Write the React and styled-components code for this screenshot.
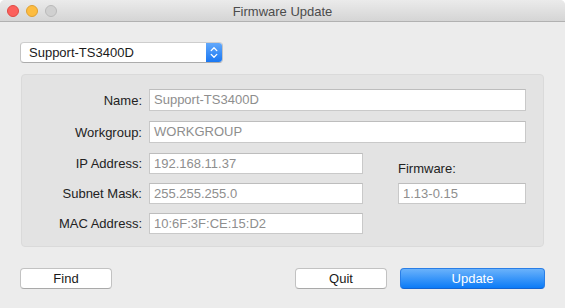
import React from "react";
import styled, { createGlobalStyle } from "styled-components";

const GlobalStyle = createGlobalStyle`
  html, body {
    margin: 0;
    padding: 0;
    background: #ffffff;
  }
  body {
    font-family: "Liberation Sans", Arial, sans-serif;
    font-size: 13px;
    -webkit-font-smoothing: antialiased;
  }
`;

const Window = styled.div`
  width: 565px;
  height: 308px;
  background: #ececec;
  border-radius: 5px 5px 0 0;
  overflow: hidden;
  display: flex;
  flex-direction: column;
`;

const TitleBar = styled.div`
  position: relative;
  height: 21px;
  flex: 0 0 21px;
  background: linear-gradient(#ebebeb, #d5d5d5);
  border-bottom: 1px solid #b1b1b1;
  display: flex;
  align-items: center;
  justify-content: center;
`;

const Lights = styled.div`
  position: absolute;
  left: 7px;
  top: 5px;
  display: flex;
  gap: 7px;
`;

const Light = styled.span`
  width: 12px;
  height: 12px;
  box-sizing: border-box;
  border-radius: 50%;
  background: ${(p) => p.color};
  border: 0.5px solid ${(p) => p.edge};
`;

const Title = styled.div`
  color: #4c4c4c;
  font-size: 13px;
  margin-top: 1px;
`;

const Content = styled.div`
  padding: 20px 20px 0 20px;
  display: flex;
  flex-direction: column;
`;

const Popup = styled.div`
  width: 203px;
  height: 21px;
  box-sizing: border-box;
  display: flex;
  background: #ffffff;
  border: 1px solid #c3c3c3;
  border-top-color: #cdcdcd;
  border-bottom-color: #acacac;
  border-radius: 4px;
  overflow: hidden;
`;

const PopupText = styled.div`
  flex: 1;
  padding-left: 8px;
  line-height: 19px;
  color: #1a1a1a;
`;

const Stepper = styled.div`
  width: 16px;
  background: linear-gradient(#62a8fb, #1a78f3);
  display: flex;
  align-items: center;
  justify-content: center;
`;

const Group = styled.div`
  margin: 11px 1px 0 1px;
  height: 173px;
  box-sizing: border-box;
  background: #e3e3e3;
  border: 1px solid #dadada;
  border-radius: 4px;
  padding: 14px 17px 0 0;
  display: grid;
  grid-template-columns: 120px 214px 21px 128px;
  grid-template-rows: 23px 23px 21px 21px 21px;
  column-gap: 7px;
  row-gap: 9px;
`;

const Label = styled.div`
  grid-column: 1;
  text-align: right;
  align-self: center;
  color: #222222;
  white-space: nowrap;
`;

const Field = styled.div`
  grid-column: ${(p) => p.span || "2"};
  height: ${(p) => p.h || 21}px;
  box-sizing: border-box;
  background: #ffffff;
  border: 1px solid #c9c9c9;
  border-top-color: #bdbdbd;
  padding-left: 4px;
  line-height: ${(p) => (p.h || 21) - 2}px;
  color: #8e8e8e;
  white-space: nowrap;
`;

const FirmwareLabel = styled.div`
  grid-column: 4;
  grid-row: 3;
  align-self: end;
  color: #222222;
  margin-bottom: -2px;
`;

const Buttons = styled.div`
  margin-top: 21px;
  display: flex;
  align-items: center;
`;

const Button = styled.div`
  width: ${(p) => p.w}px;
  height: 21px;
  box-sizing: border-box;
  border-radius: 4px;
  display: flex;
  align-items: center;
  justify-content: center;
  color: ${(p) => (p.primary ? "#ffffff" : "#1a1a1a")};
  background: ${(p) =>
    p.primary ? "linear-gradient(#6ab2fb, #0b7bf7)" : "#ffffff"};
  border: 1px solid ${(p) => (p.primary ? "#2a7ee6" : "#c2c2c2")};
  border-bottom-color: ${(p) => (p.primary ? "#1464d0" : "#a9a9a9")};
  margin-left: ${(p) => p.ml || 0};
`;

const rows = [
  { label: "IP Address:", value: "192.168.11.37" },
  { label: "Subnet Mask:", value: "255.255.255.0" },
  { label: "MAC Address:", value: "10:6F:3F:CE:15:D2" },
];

export default function App() {
  return (
    <Window>
      <GlobalStyle />
      <TitleBar>
        <Lights>
          <Light color="#fc605c" edge="#de4a44" />
          <Light color="#fdbc40" edge="#dea032" />
          <Light color="#d0d0d0" edge="#b9b9b9" />
        </Lights>
        <Title>Firmware Update</Title>
      </TitleBar>
      <Content>
        <Popup>
          <PopupText>Support-TS3400D</PopupText>
          <Stepper>
            <svg width="8" height="13" viewBox="0 0 8 13">
              <path
                d="M1.2 4.6 L4 1.8 L6.8 4.6 M1.2 8.4 L4 11.2 L6.8 8.4"
                fill="none"
                stroke="#ffffff"
                strokeWidth="1.3"
                strokeLinecap="round"
                strokeLinejoin="round"
              />
            </svg>
          </Stepper>
        </Popup>
        <Group>
          <Label>Name:</Label>
          <Field span="2 / 5" h={22}>Support-TS3400D</Field>
          <Label>Workgroup:</Label>
          <Field span="2 / 5" h={22}>WORKGROUP</Field>
          <FirmwareLabel>Firmware:</FirmwareLabel>
          {rows.map((r, i) => (
            <React.Fragment key={i}>
              <Label style={{ gridRow: i + 3 }}>{r.label}</Label>
              <Field style={{ gridRow: i + 3 }}>{r.value}</Field>
            </React.Fragment>
          ))}
          <Field span="4" style={{ gridRow: 4 }}>1.13-0.15</Field>
        </Group>
        <Buttons>
          <Button w={92}>Find</Button>
          <Button w={92} ml="auto">Quit</Button>
          <Button w={145} ml="13px" primary>
            Update
          </Button>
        </Buttons>
      </Content>
    </Window>
  );
}
